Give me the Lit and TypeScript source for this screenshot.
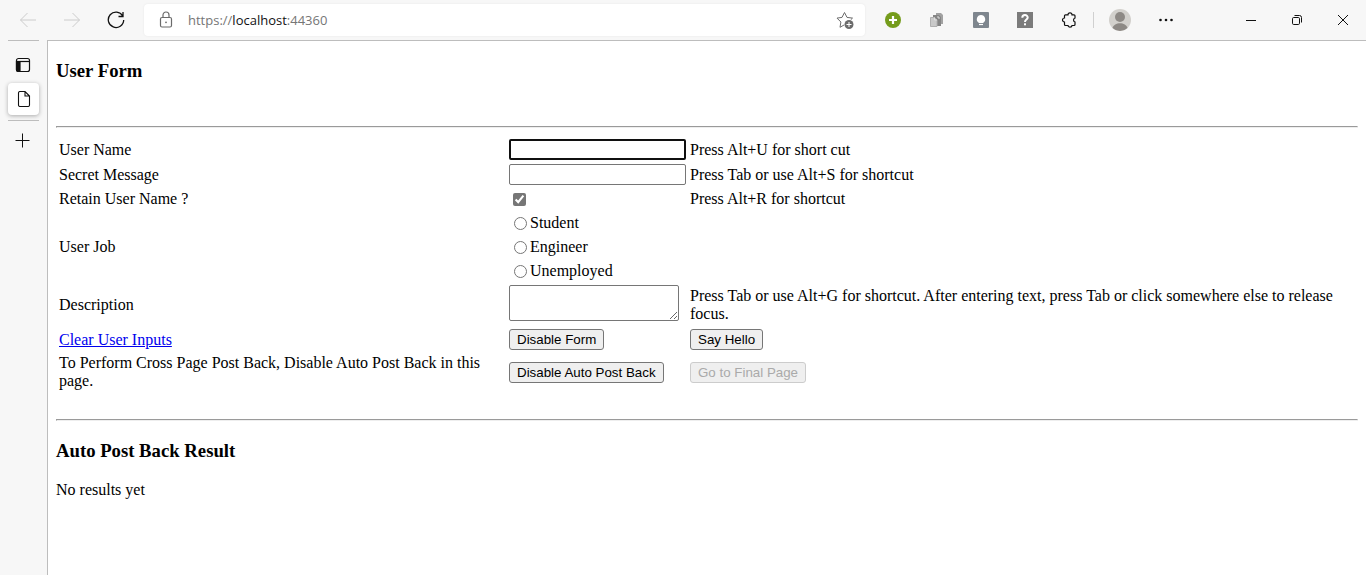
import { LitElement, html, css } from "lit";
import { customElement } from "lit/decorators.js";

@customElement("browser-toolbar")
class BrowserToolbar extends LitElement {
  static styles = css`
    :host { display: block; }
    .bar {
      display: flex;
      align-items: center;
      height: 40px;
      background: #f7f7f7;
      font-family: "Open Sans", "Noto Sans", sans-serif;
    }
    button {
      display: grid;
      place-items: center;
      padding: 0;
      border: 0;
      background: none;
      color: #111;
    }
    svg { display: block; fill: none; stroke: currentColor; }
    .solid { stroke: none; }
    .nav { display: flex; padding: 0 6px; }
    .nav button { width: 44px; height: 32px; }
    .nav button:disabled { color: #ccc; }
    .address {
      flex: 1;
      display: flex;
      align-items: center;
      gap: 14px;
      height: 32px;
      padding: 0 11px 0 14px;
      border-radius: 4px;
      background: #fff;
      box-shadow: 0 0 2px #e4e4e4;
      color: #6b6b6b;
    }
    .url { flex: 1; font-size: 13px; line-height: 18px; color: #767676; }
    .host { color: #111; }
    .tools { display: flex; align-items: center; padding-left: 6px; }
    .tools button { width: 44px; height: 32px; }
    .divider { width: 1px; height: 16px; margin-left: 2px; background: #d0d0d0; }
    .tools .profile { width: 46px; margin-left: 3px; }
    .window { display: flex; padding-left: 41px; }
    .window button { width: 46px; height: 32px; }
  `;

  render() {
    return html`
      <header class="bar">
        <nav class="nav">
          <button disabled aria-label="Back">
            <svg width="18" height="16" viewBox="0 0 18 16"><path d="M17 8H1.5M8.500 1L1.500 8l7 7" /></svg>
          </button>
          <button disabled aria-label="Forward">
            <svg width="18" height="16" viewBox="0 0 18 16"><path d="M1 8h15.500M9.500 1l7 7-7 7" /></svg>
          </button>
          <button aria-label="Refresh">
            <svg width="18" height="18" viewBox="0 0 18 18" stroke-width="1.300"><path d="M15.700 5A7.700 7.700 0 1 0 16.700 9M16 1v4.500h-4.500" /></svg>
          </button>
        </nav>
        <div class="address">
          <svg width="16" height="18" viewBox="0 0 16 18" stroke-width="1.200">
            <rect x="2.500" y="6.500" width="11" height="9.500" rx="1.500" />
            <path d="M5 6.500V4a3 3 0 0 1 6 0v2.500" />
            <circle cx="8" cy="11.300" r=".9" fill="currentColor" stroke="none" />
          </svg>
          <span class="url">https://<span class="host">localhost</span>:44360</span>
          <svg width="18" height="18" viewBox="0 0 18 18">
            <path d="M8 14l-4 2.300.9-5.300L1 7.100l5-.7L8.500 1.500 11 6.400l5.500.7-1.700 1.600" />
            <circle cx="13" cy="13.500" r="4.500" fill="currentColor" stroke="none" />
            <path d="M10.500 13.500h5M13 11v5" stroke="#fff" />
          </svg>
        </div>
        <div class="tools">
          <button aria-label="Add">
            <svg class="solid" width="16" height="16" viewBox="0 0 16 16">
              <circle cx="8" cy="8" r="8" fill="#759c1c" />
              <path d="M8 4v8M4 8h8" stroke="#fff" stroke-width="2.200" />
            </svg>
          </button>
          <button aria-label="Copy pages">
            <svg class="solid" width="16" height="16" viewBox="0 0 16 16">
              <path d="M7 1h5l2 2v9H7z" fill="#a2a2a2" />
              <path d="M4 3h6l2 2v9H4z" fill="#858585" />
              <path d="M1.500 5.500h4l2.500 2.500v6.500H1.500z" fill="#c9c9c9" stroke="#b0b0b0" />
              <path d="M5.500 5.500v2.500H8M9 4v2h2" stroke="#ddd" fill="none" />
            </svg>
          </button>
          <button aria-label="Ideas">
            <svg class="solid" width="16" height="16" viewBox="0 0 16 16">
              <rect width="16" height="16" rx="1" fill="#7e868e" />
              <path d="M8 3a4.200 4.200 0 0 0-2.300 7.700V11h4.600v-.3A4.200 4.200 0 0 0 8 3z" fill="#fff" />
              <path d="M6 12.500h4" stroke="#fff" stroke-width="1.200" />
            </svg>
          </button>
          <button aria-label="Help">
            <svg class="solid" width="16" height="16" viewBox="0 0 16 16">
              <rect width="16" height="16" fill="#7b7b7b" />
              <path d="M5.300 5.800C5.300 2.200 10.700 2.200 10.700 5.600 10.700 7.700 8 7.500 8 10" fill="none" stroke="#fff" stroke-width="2" />
              <rect x="7" y="11.300" width="2" height="2" fill="#fff" />
            </svg>
          </button>
          <button aria-label="Extensions">
            <svg width="16" height="16" viewBox="0 0 16 16" stroke-width="1.200">
              <path d="M4.500 2.800H7a2 1.900 0 0 1 4 0h2a1 1 0 0 1 1 1V6a2.100 2.100 0 0 0 0 4v2.500a1 1 0 0 1-1 1h-2a2 1.600 0 0 1-4 0H4.500a1 1 0 0 1-1-1V10a2 2 0 0 1 0-4V3.800a1 1 0 0 1 1-1z" />
            </svg>
          </button>
          <span class="divider"></span>
          <button class="profile" aria-label="Profile">
            <svg class="solid" width="22" height="22" viewBox="0 0 22 22">
              <circle cx="11" cy="11" r="11" fill="#d2d0cc" />
              <circle cx="11" cy="8" r="5" fill="#8d8985" />
              <path d="M3.500 19C5 12.500 17 12.500 18.500 19A11 11 0 0 1 3.500 19z" fill="#8d8985" />
            </svg>
          </button>
          <button aria-label="More">
            <svg class="solid" width="16" height="16" viewBox="0 0 16 16">
              <g fill="#111"><circle cx="3.500" cy="8" r="1.300" /><circle cx="9" cy="8" r="1.300" /><circle cx="14.500" cy="8" r="1.300" /></g>
            </svg>
          </button>
        </div>
        <div class="window">
          <button aria-label="Minimise"><svg width="10" height="10" viewBox="0 0 10 10"><path d="M0 5.500h10" /></svg></button>
          <button aria-label="Restore">
            <svg width="10" height="10" viewBox="0 0 10 10"><rect x=".5" y="2.500" width="7" height="7" rx="1.200" /><path d="M2.500.5H7.500a2 2 0 0 1 2 2V7.500" /></svg>
          </button>
          <button aria-label="Close"><svg width="10" height="10" viewBox="0 0 10 10"><path d="M0 0l10 10M10 0L0 10" /></svg></button>
        </div>
      </header>
    `;
  }
}

@customElement("tab-rail")
class TabRail extends LitElement {
  static styles = css`
    :host { display: block; background: #f7f7f7; }
    .rail {
      display: flex;
      flex-direction: column;
      width: 31px;
      padding: 0 8px;
    }
    .line { height: 1px; background: #bdbdbd; }
    button {
      display: grid;
      place-items: center;
      height: 32px;
      padding: 0;
      border: 0;
      border-radius: 4px;
      background: none;
      color: #111;
    }
    .menu { margin-top: 8px; padding-right: 1px; }
    .tab { margin: 2px 0 5px; background: #fff; box-shadow: 0 1px 4px #aaa; }
    .add { margin-top: 3px; padding-right: 2px; }
    svg { display: block; fill: none; stroke: currentColor; }
  `;

  render() {
    return html`
      <aside class="rail">
        <span class="line"></span>
        <button class="menu" aria-label="Tab actions">
          <svg width="16" height="16" viewBox="0 0 16 16" stroke-width="1.200">
            <rect x="1.500" y="1.500" width="13" height="13" rx="2" />
            <path d="M1.500 4.500h13" />
            <path d="M1.500 4.500h3.500v10H3a1.500 1.500 0 0 1-1.500-1.500z" fill="currentColor" />
          </svg>
        </button>
        <button class="tab" aria-label="Current tab">
          <svg width="16" height="16" viewBox="0 0 16 16" stroke-width="1.100">
            <path d="M9 .5H4A1.500 1.500 0 0 0 2.500 2v12A1.500 1.500 0 0 0 4 15.500h8a1.500 1.500 0 0 0 1.500-1.500V5zM9 .5V5h4.500" />
          </svg>
        </button>
        <span class="line"></span>
        <button class="add" aria-label="New tab">
          <svg width="15" height="15" viewBox="0 0 15 15"><path d="M7.500.5v14M.5 7.500h14" /></svg>
        </button>
      </aside>
    `;
  }
}

@customElement("user-form")
class UserForm extends LitElement {
  static styles = css`
    :host {
      display: block;
      padding: 8px;
      font-family: "Liberation Serif", "Times New Roman", serif;
      font-size: 16px;
      line-height: 18px;
      color: #000;
    }
    h3 { margin: 11px 0 0; line-height: 22px; }
    hr { margin: 0; border: 1px solid; border-color: #9a9a9a #eee #eee #9a9a9a; }
    .top { margin-top: 44px; }
    .bottom { margin-top: 29px; }
    .result { margin-top: 19px; }
    p { margin: 19px 0 0; }
    form {
      display: grid;
      grid-template-columns: 446fr 177px 665fr;
      grid-template-rows: 21px 21px 20px auto 40px 21px auto;
      gap: 4px;
      align-items: center;
      margin-top: 11px;
      padding: 0 3px;
    }
    .hint { grid-column: 3; }
    .text {
      box-sizing: border-box;
      width: 100%;
      height: 21px;
      margin: 0;
      padding: 1px 2px;
      border: 1px solid #767676;
      border-radius: 2px;
    }
    .current { border: 2px solid #101010; outline: none; }
    input[type="checkbox"] { accent-color: #767676; justify-self: start; margin: 0 4px; }
    fieldset {
      display: grid;
      gap: 4px;
      min-width: 0;
      margin: 0;
      padding: 0;
      border: 0;
    }
    .choice { display: flex; align-items: center; height: 20px; }
    input[type="radio"] { margin: 0 3px 0 5px; }
    textarea {
      box-sizing: border-box;
      align-self: start;
      width: 170px;
      height: 36px;
      margin: 0;
      padding: 2px;
      border: 1px solid #767676;
      border-radius: 2px;
      resize: both;
    }
    a { color: #00e; }
    button {
      justify-self: start;
      height: 21px;
      margin: 0;
      padding: 0 7px;
      border: 1px solid #767676;
      border-radius: 3px;
      background: #efefef;
      color: #000;
      font-family: "Liberation Sans", Arial, sans-serif;
      white-space: nowrap;
    }
    button:disabled { border-color: #ccc; color: #aaa; }
  `;

  render() {
    return html`
      <main>
        <h3>User Form</h3>
        <hr class="top" />
        <form @submit=${(e: Event) => e.preventDefault()}>
          <label for="name">User Name</label>
          <input class="text current" id="name" type="text" accesskey="u" />
          <span class="hint">Press Alt+U for short cut</span>

          <label for="secret">Secret Message</label>
          <input class="text" id="secret" type="password" accesskey="s" />
          <span class="hint">Press Tab or use Alt+S for shortcut</span>

          <label for="retain">Retain User Name ?</label>
          <input id="retain" type="checkbox" accesskey="r" checked />
          <span class="hint">Press Alt+R for shortcut</span>

          <span id="job">User Job</span>
          <fieldset aria-labelledby="job">
            ${["Student", "Engineer", "Unemployed"].map(
              (job) => html`<label class="choice"><input type="radio" name="job" value=${job} />${job}</label>`
            )}
          </fieldset>
          <span></span>

          <label for="description">Description</label>
          <textarea id="description" rows="2" accesskey="g"></textarea>
          <span class="hint">Press Tab or use Alt+G for shortcut. After entering text, press Tab or click somewhere else to release focus.</span>

          <span><a href="#">Clear User Inputs</a></span>
          <button type="button">Disable Form</button>
          <button type="button">Say Hello</button>

          <span>To Perform Cross Page Post Back, Disable Auto Post Back in this page.</span>
          <button type="button">Disable Auto Post Back</button>
          <button type="button" disabled>Go to Final Page</button>
        </form>
        <hr class="bottom" />
        <h3 class="result">Auto Post Back Result</h3>
        <p>No results yet</p>
      </main>
    `;
  }
}

@customElement("app-root")
class AppRoot extends LitElement {
  static styles = css`
    :host {
      display: flex;
      flex-direction: column;
      min-height: 100vh;
      background: #fff;
    }
    .body { flex: 1; display: flex; background: #f7f7f7; }
    .page {
      flex: 1;
      min-width: 0;
      border-top: 1px solid #bdbdbd;
      border-left: 1px solid #bdbdbd;
      background: #fff;
    }
  `;

  render() {
    return html`
      <browser-toolbar></browser-toolbar>
      <div class="body">
        <tab-rail></tab-rail>
        <user-form class="page"></user-form>
      </div>
    `;
  }
}
